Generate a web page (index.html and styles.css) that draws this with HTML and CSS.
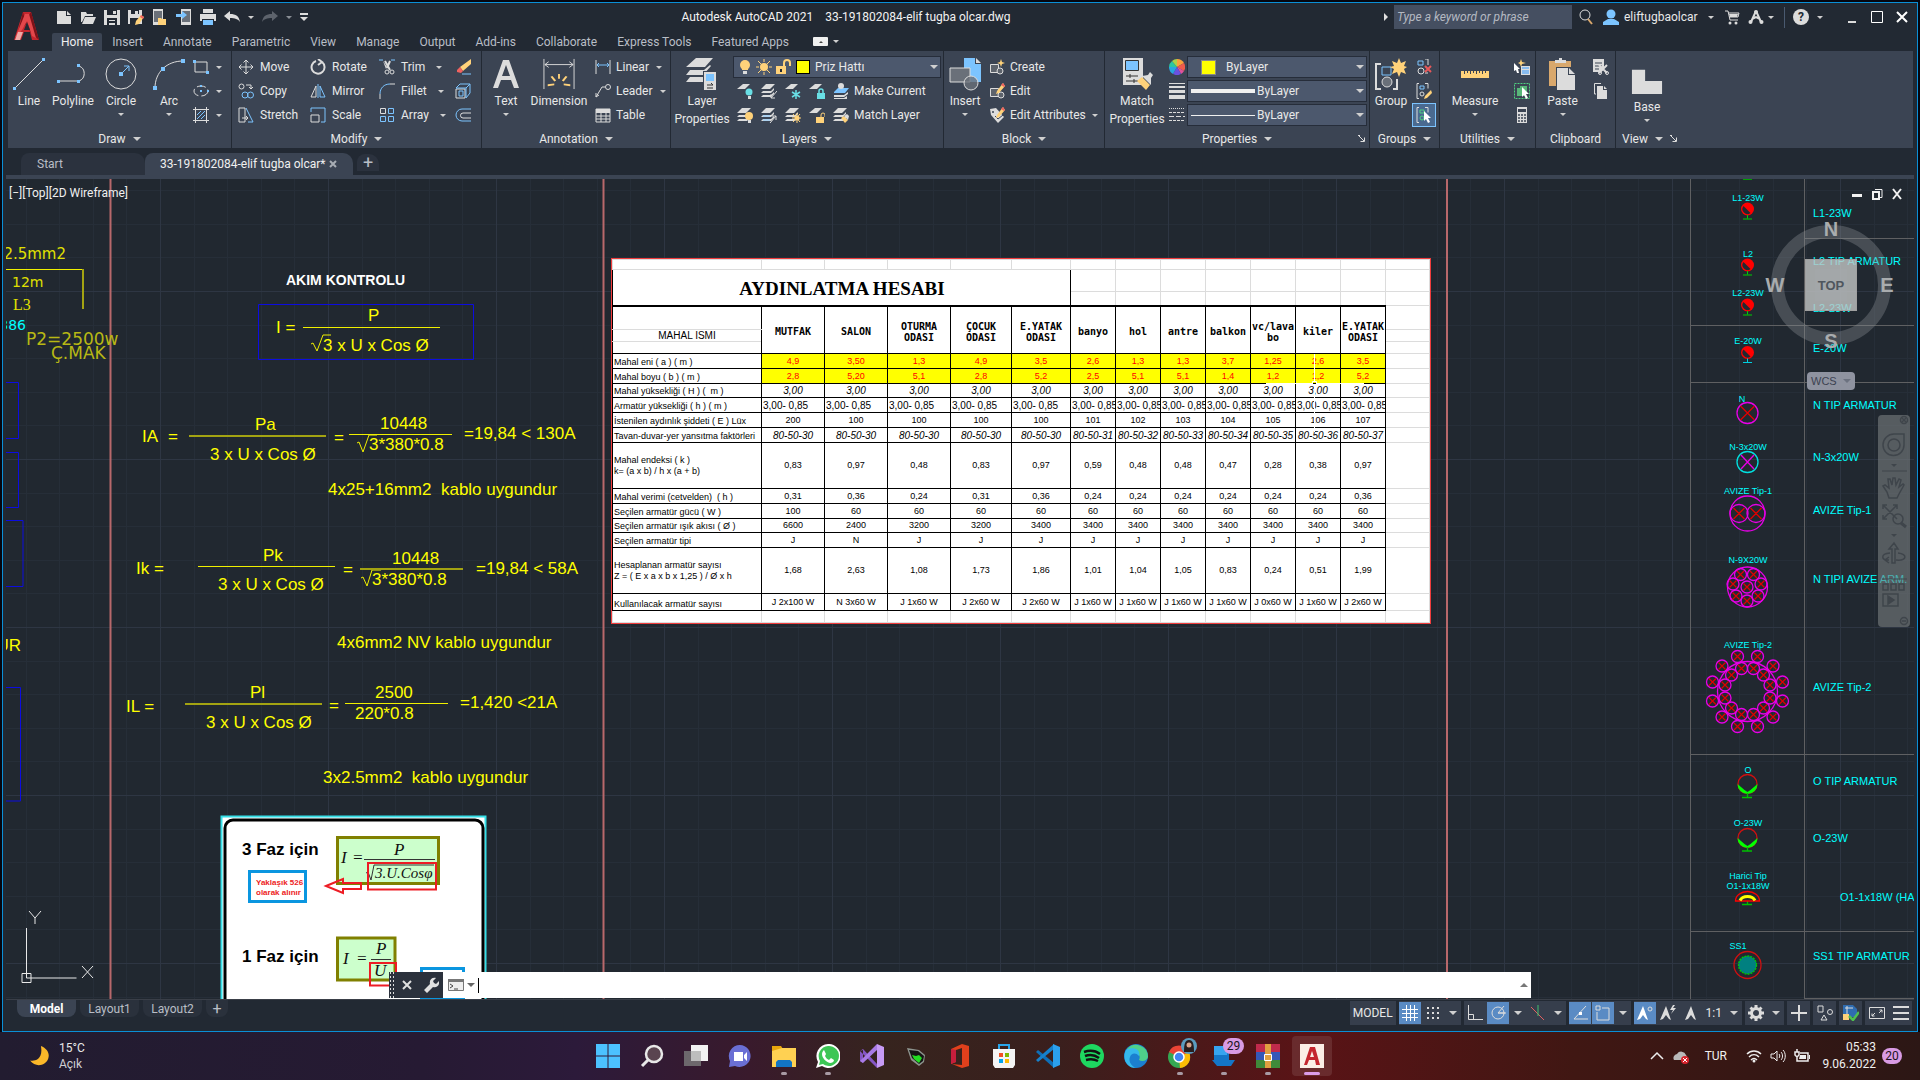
FILE: index.html
```html
<!DOCTYPE html>
<html lang="en">
<head>
<meta charset="utf-8">
<title>Autodesk AutoCAD 2021</title>
<link rel="stylesheet" href="styles.css">
</head>
<body>
<svg class="sprite" aria-hidden="true">
  <defs>
    <!-- quick access -->
    <symbol id="i-new" viewBox="0 0 16 16"><path class="fw" d="M1 2h9v5h5v8H1z"/><path class="fw" d="M11 2l4 4h-4z"/></symbol>
    <symbol id="i-open" viewBox="0 0 16 16"><path class="fw" d="M1 3h5l1 2h6v2H5l-3 6H1z"/><path class="fw" d="M5 8h11l-3 7H2z"/></symbol>
    <symbol id="i-save" viewBox="0 0 16 16"><path class="fw" d="M0 1h16v15H0z"/><path class="bg" d="M3 1h10v5H3zM3 9h10v7H3z"/><path class="fw" d="M9 2h3v3H9zM5 11h6v1H5zM5 14h6v2H5z"/></symbol>
    <symbol id="i-saveas" viewBox="0 0 16 16"><path class="fw" d="M0 1h14v14H0z"/><path class="bg" d="M3 1h8v4H3zM2 9h9v6H2z"/><path class="fw" d="M7 2h3v3H7z"/><path class="fy" d="M13 6l3 2-5 7-4 1 1-4z"/><path class="fr" d="M13 6l3 2-1 2-3-2z"/></symbol>
    <symbol id="i-phone" viewBox="0 0 16 16"><path class="fw" d="M1 0h10v16H1z"/><path class="fg" d="M2 2h8v11H2z"/><path class="fy" d="M6 9h3l1 1h4v6H6z"/></symbol>
    <symbol id="i-phone2" viewBox="0 0 16 16"><path class="fw" d="M5 0h10v16H5z"/><path class="fg" d="M6 2h8v11H6z"/><path class="fb" d="M0 5h6V2l5 4-5 4V8H0z"/></symbol>
    <symbol id="i-print" viewBox="0 0 16 16"><path class="fw" d="M3 0h10v4H3zM0 5h16v7H0z"/><path class="bg" d="M2 10h12v6H2z"/><path class="fb" d="M3 11h10v5H3z"/></symbol>
    <symbol id="i-undo" viewBox="0 0 16 16"><path class="fw" d="M0 7l6-5v3c6 0 9 2 10 8-2-3-5-4-10-4v3z"/></symbol>
    <symbol id="i-redo" viewBox="0 0 16 16"><path fill="#5d636c" d="M16 7l-6-5v3C4 5 1 7 0 13c2-3 5-4 10-4v3z"/></symbol>
    <symbol id="i-more" viewBox="0 0 8 8"><path class="fw" d="M0 0h8v2H0zM0 4h8L4 8z"/></symbol>
    <!-- big ribbon icons -->
    <symbol id="b-line" viewBox="0 0 32 32"><path class="sw" d="M2 30L30 2"/><path class="fb" d="M0 29h3v3H0zM29 0h3v3h-3z"/></symbol>
    <symbol id="b-poly" viewBox="0 0 32 32"><path class="sw" d="M2 23h20a8 8 0 0 0 0-15"/><path class="fb" d="M0 22h3v3H0zM20 22h3v3h-3zM20 6h3v3h-3z"/></symbol>
    <symbol id="b-circle" viewBox="0 0 32 32"><circle class="sw" cx="16" cy="16" r="15"/><path class="sb" d="M16 16l8-8m-5 0h5v5"/><path class="fb" d="M14 14h4v4h-4z"/></symbol>
    <symbol id="b-arc" viewBox="0 0 32 32"><path class="sw" d="M2 30C2 14 14 3 30 3"/><path class="fb" d="M0 28h4v4H0zM8 9h4v4H8zM28 1h4v4h-4z"/></symbol>
    <symbol id="b-text" viewBox="0 0 32 32"><path class="fw" d="M3 30L13 2h6l10 28h-5l-3-8H11l-3 8zM12 18h8L16 7z"/></symbol>
    <symbol id="b-dim" viewBox="0 0 34 34"><path class="sw" d="M1 1v32M33 1v32M2 7h30M6 4L2 7l4 3M28 4l4 3-4 3"/><path class="fy" d="M16 17h2v5h-2zM8 20l2-1 4 5-2 1zM26 20l-2-1-4 5 2 1zM5 28l7-1v2l-7 1zM29 28l-7-1v2l7 1z"/></symbol>
    <symbol id="b-layers" viewBox="0 0 32 34"><path class="fw" d="M0 10L10 1h17l-8 9zM0 18l4-5h14l6-5 1 1-8 9zM0 25l4-5h13v5z"/><path class="bgr" d="M17 14h15v20H17z"/><path class="fw" d="M18 15h12v18H18z"/><path class="fb" d="M20 17h8v7h-8z"/><path fill="none" stroke="#333" d="M21 28h6m-2-2l2 2M27 31h-6"/></symbol>
    <symbol id="b-insert" viewBox="0 0 32 32"><path class="fb" d="M15 0h11v6h6v18H15z"/><path class="fw" d="M27 0l5 5h-5z"/><path fill="#6a7079" stroke="#dcdcdc" d="M1 10h20v14H1z"/><circle fill="#6a7079" fill-opacity=".8" stroke="#dcdcdc" cx="22" cy="25" r="7"/></symbol>
    <symbol id="b-match" viewBox="0 0 32 32"><path class="fw" d="M2 0h20v27H2z"/><path fill="#7cc4ff" stroke="#333" d="M4.500 2.500h13v10h-13z"/><path fill="none" stroke="#333" d="M5 18h12M5 23h12M9 16v4M13 21v4"/><path class="fy" d="M16 23l5-4 8 8-4 5z"/><path class="fw" d="M21 18l6-1 2-3 3 3-2 3v7z"/></symbol>
    <symbol id="b-group" viewBox="0 0 32 32"><path class="sw2" d="M6 6H1v25h5M18 31h4v-10"/><path class="sb" d="M7 9h9v8H7z"/><circle fill="#6a7079" stroke="#dcdcdc" cx="12" cy="24" r="5"/><path class="fy" d="M24 0l2 5 5-2-2 5 3 1-3 2 2 5-5-2-2 5-2-5-5 2 2-5-4-2 4-1-2-5 5 2z"/></symbol>
    <symbol id="b-measure" viewBox="0 0 32 32"><path class="fy" d="M2 13h28v7H2z"/><path stroke="#3b4453" d="M5.500 13v3M8.500 13v2M11.500 13v3M14.500 13v2M17.500 13v3M20.500 13v2M23.500 13v3M26.500 13v2"/></symbol>
    <symbol id="b-paste" viewBox="0 0 32 32"><path fill="#d9a86c" d="M2 3h22v25H2z"/><path class="fw" d="M8 2h4V0h3v2h4v3H8z"/><path class="bgr" d="M9 9h20v23H9z"/><path class="fw" d="M10 10h11v7h7v15H10zM22 10l6 6h-6z"/></symbol>
    <symbol id="b-base" viewBox="0 0 34 32"><path class="fw" d="M1 5h14v12h18v14H1z"/></symbol>
    <!-- small ribbon icons -->
    <symbol id="s-rect" viewBox="0 0 16 16"><path class="sw" d="M2 3h12v10H2z"/><path class="fb" d="M0 1h3v3H0zM13 12h3v3h-3z"/></symbol>
    <symbol id="s-ellipse" viewBox="0 0 16 16"><ellipse class="sw" cx="8" cy="8" rx="7" ry="5" stroke-dasharray="9 3"/><path class="fb" d="M7 7h2v2H7zM7 2h2v2H7zM14 7h2v2h-2z"/></symbol>
    <symbol id="s-hatch" viewBox="0 0 16 16"><path class="sw" d="M2.500 0v16M13.500 0v16M0 2.500h16M0 13.500h16"/><path class="sb" d="M4 8l4-4M4 12l8-8M8 12l4-4"/></symbol>
    <symbol id="s-move" viewBox="0 0 16 16"><path class="sw" d="M8 1v14M1 8h14M5.500 3.500L8 1l2.500 2.500M5.500 12.500L8 15l2.500-2.500M3.500 5.500L1 8l2.500 2.500M12.500 5.500L15 8l-2.500 2.500"/></symbol>
    <symbol id="s-rotate" viewBox="0 0 16 16"><path class="sw2" d="M12 3a6.500 6.500 0 1 1-6-1M8 0l4 3-4 3"/></symbol>
    <symbol id="s-trim" viewBox="0 0 16 16"><path class="sb" d="M0 1h4M12 1h4"/><path class="sw" stroke-width="2" d="M6 2l5 9M11 2L8 9"/><circle class="sw" cx="8" cy="13" r="2"/><circle class="sw" cx="13" cy="13" r="2"/><path class="fw" d="M4 2l3 8 1-2z"/></symbol>
    <symbol id="s-erase" viewBox="0 0 16 16"><path class="fy" d="M16 0v5L8 12 5 8z"/><path class="fr" d="M5 8l3 4-2 2-4-1v-2z"/><path class="sb" d="M7 15h9"/></symbol>
    <symbol id="s-copy" viewBox="0 0 16 16"><circle class="sw" cx="3.500" cy="3.500" r="2.500"/><path class="sw" d="M8 2h5v4m-2-2l2 2 2-2"/><circle class="sb" cx="7" cy="12" r="3"/><circle class="sb" cx="12.500" cy="12" r="3"/></symbol>
    <symbol id="s-mirror" viewBox="0 0 16 16"><path class="sw" d="M6 3v11H1z"/><path class="sb" d="M10 3v11h5zM8 1v14"/></symbol>
    <symbol id="s-fillet" viewBox="0 0 16 16"><path class="sb" d="M1 11C1 5 5 1 11 1"/><path class="sw" d="M1 11v5M11 1h5"/></symbol>
    <symbol id="s-explode" viewBox="0 0 16 16"><path class="sw" d="M1 6h9v9H1z"/><path class="sb" d="M1 5l4-4h10l-4 4zM15 1v9l-4 5V5M4 8h4v5H4z"/></symbol>
    <symbol id="s-stretch" viewBox="0 0 16 16"><path class="sw" d="M1 1h6v14H1zM4 11h6m-2-2l2 2-2 2"/><path class="sb" d="M8 1l7 14h-5"/></symbol>
    <symbol id="s-scale" viewBox="0 0 16 16"><path class="sb" d="M1 5V1h14v14h-4"/><path class="sw" d="M1 8h8v7H1z"/></symbol>
    <symbol id="s-array" viewBox="0 0 16 16"><path class="sw" d="M1.500 1.500h5v5h-5z"/><path class="sb" d="M9.500 1.500h5v5h-5zM1.500 9.500h5v5h-5zM9.500 9.500h5v5h-5z"/></symbol>
    <symbol id="s-offset" viewBox="0 0 16 16"><path class="sb" d="M16 2H7a6 6 0 0 0 0 12h9"/><path class="sw" d="M16 6H8a2.500 2.500 0 0 0 0 5h8"/></symbol>
    <symbol id="s-linear" viewBox="0 0 16 16"><path class="sw" d="M1 1v14M15 1v14"/><path class="sb" d="M2 6h12M4 4L2 6l2 2M12 4l2 2-2 2"/></symbol>
    <symbol id="s-leader" viewBox="0 0 16 16"><circle class="sw" cx="13" cy="4" r="2.500"/><path class="sw" d="M10 4H7L1 14m0-4v4l3-2"/></symbol>
    <symbol id="s-table" viewBox="0 0 16 16"><path class="sw" d="M1 2h14v13H1zM1 9h14M1 12h14M6 5v10M11 5v10"/><path class="fw" d="M1 2h14v4H1z"/></symbol>
    <symbol id="s-ly" viewBox="0 0 16 16"><path class="fw" d="M0 6l5-5h9L9 6zM0 10l2-2h8l3-3v2l-3 3zM0 14l2-2h8l3-3v2l-3 3z"/></symbol>
    <symbol id="s-ly1" viewBox="0 0 16 16"><path class="fw" d="M0 6l6-5h7L8 6z"/></symbol>
    <symbol id="s-loff" viewBox="0 0 16 16"><use href="#s-ly1"/><circle cx="12" cy="9" r="3.500" fill="#69dfe5"/><path class="fw" d="M11 13h3v3h-3z"/></symbol>
    <symbol id="s-liso" viewBox="0 0 16 16"><use href="#s-ly"/><path class="sw" d="M16 8l-6 7m0-4v4h4"/></symbol>
    <symbol id="s-lfrz" viewBox="0 0 16 16"><use href="#s-ly1"/><path stroke="#69dfe5" stroke-width="1.500" d="M11 7v9M7 9l8 5M15 9l-8 5"/></symbol>
    <symbol id="s-llock" viewBox="0 0 16 16"><use href="#s-ly1"/><path fill="#69dfe5" d="M8 10h8v6H8z"/><path fill="none" stroke="#69dfe5" stroke-width="1.500" d="M10 10V8a2 2 0 0 1 4 0v2"/></symbol>
    <symbol id="s-lcur" viewBox="0 0 16 16"><path class="fb" d="M1 9l4-4h11l-4 5H1z"/><path class="fw" d="M1 12h10l4-3v2l-4 3H1zM1 15h10l3-2v3H1z"/><circle class="fw" cx="8" cy="3" r="3"/></symbol>
    <symbol id="s-lon" viewBox="0 0 16 16"><use href="#s-ly"/><circle cx="12" cy="9" r="4" class="fy"/><path class="fw" d="M11 13h3v3h-3z"/></symbol>
    <symbol id="s-luniso" viewBox="0 0 16 16"><use href="#s-ly"/><path class="sb" d="M2 9h7M2 13h7"/><path class="sw" d="M9 16l6-7m-4 0h4v4"/></symbol>
    <symbol id="s-lthaw" viewBox="0 0 16 16"><use href="#s-ly"/><circle cx="12" cy="11" r="2.500" class="fy"/><path class="sy" d="M12 6v10M7 11h9M8 7l7 8M15 7l-7 8"/></symbol>
    <symbol id="s-lunlock" viewBox="0 0 16 16"><use href="#s-ly1"/><path class="fy" d="M7 10h8v6H7z"/><path class="sy" d="M12 10V8a2 2 0 0 1 4 0v2"/></symbol>
    <symbol id="s-lmatch" viewBox="0 0 16 16"><use href="#s-ly"/><path class="fy" d="M8 11l3-2 4 4-3 3z"/><path class="fw" d="M11 9l3-2 2 2-1 4z"/></symbol>
    <symbol id="s-bulb" viewBox="0 0 16 16"><circle class="fy" cx="8" cy="6" r="5"/><path class="fy" d="M5 8h6v3H5z"/><path class="fw" d="M6 12h4v3H6z"/></symbol>
    <symbol id="s-sun" viewBox="0 0 16 16"><circle class="fy" cx="8" cy="8" r="4"/><path class="sy" d="M8 0v3M8 13v3M0 8h3M13 8h3M2 2l3 3M11 11l3 3M14 2l-3 3M5 11l-3 3"/></symbol>
    <symbol id="s-lock" viewBox="0 0 16 16"><path class="fy" d="M1 7h10v8H1z"/><path fill="none" stroke="#ffd27a" stroke-width="2" d="M9 7V4a3 3 0 0 1 6 0v3"/><path class="bg" d="M5 10h2v3H5z"/></symbol>
    <symbol id="s-create" viewBox="0 0 16 16"><path fill="#5d636c" stroke="#dcdcdc" d="M1.500 5.500h8v8h-8z"/><circle fill="#5d636c" stroke="#dcdcdc" cx="11" cy="12" r="3"/><path class="fy" d="M12 0l1 3 3 1-3 1-1 3-1-3-3-1 3-1z"/></symbol>
    <symbol id="s-edit" viewBox="0 0 16 16"><path fill="#5d636c" stroke="#dcdcdc" d="M1.500 5.500h8v8h-8z"/><circle fill="#5d636c" stroke="#dcdcdc" cx="12" cy="12" r="3"/><path class="fy" d="M14 0l2 3-6 7-3 1 1-3z"/><path class="fr" d="M14 0l2 3-1 1-3-2z"/></symbol>
    <symbol id="s-attr" viewBox="0 0 16 16"><path class="fw" d="M1 2l6-1 8 9-6 6-7-8z"/><circle class="bgr" cx="4" cy="5" r="1"/><path fill="none" stroke="#3b4453" d="M6 9l3 3 5-4"/><path class="fy" d="M14 0l2 3-6 7-3 1 1-3z"/><path class="fr" d="M14 0l2 3-1 1-3-2z"/></symbol>
    <symbol id="s-wheel" viewBox="0 0 16 16"><path fill="#f9a13a" d="M8 8V0a8 8 0 0 1 7 4z"/><path fill="#ef5b4c" d="M8 8l7-4a8 8 0 0 1 0 8z"/><path fill="#e0529c" d="M8 8l7 4a8 8 0 0 1-3 3z"/><path fill="#6b52e0" d="M8 8l4 7a8 8 0 0 1-8 0z"/><path fill="#2aa5e0" d="M8 8l-4 7a8 8 0 0 1-4-7z"/><path fill="#2bc6a0" d="M8 8H0a8 8 0 0 1 3-6z"/><path fill="#a7d34a" d="M8 8L3 2a8 8 0 0 1 5-2z"/></symbol>
    <symbol id="s-lw" viewBox="0 0 16 16"><path class="fw" d="M0 0h16v1H0zM0 3h16v2H0zM0 7h16v3H0zM0 12h16v4H0z"/></symbol>
    <symbol id="s-lt" viewBox="0 0 16 16"><path class="sw" stroke-dasharray="1 1" d="M0 1.500h16"/><path class="sw" stroke-dasharray="3 1" d="M0 5.500h16M0 13.500h16"/><path class="sw" stroke-dasharray="5 2" d="M0 9.500h16"/></symbol>
    <symbol id="s-ungroup" viewBox="0 0 16 16"><path class="sb" d="M2 2h5v4H2z"/><circle class="sw" cx="5" cy="12" r="3"/><path class="sw" d="M9 0h3v6M12 14h-3"/><path stroke="#e8585a" stroke-width="2" d="M9 7l6 6M15 7l-6 6"/></symbol>
    <symbol id="s-gedit" viewBox="0 0 16 16"><path class="sw" d="M3 .5H1v15h2M9 .5h3v5"/><path class="sb" d="M4 3h4v3H4z"/><circle class="sw" cx="6" cy="11" r="2"/><path class="fy" d="M15 7l1 3-5 5-3 1 1-3z"/></symbol>
    <symbol id="s-gsel" viewBox="0 0 16 16"><path class="sw" d="M3 .5H1v15h2M9 .5h3v5"/><path fill="none" stroke="#4fd080" d="M4 3h4v3H4z"/><circle fill="none" stroke="#4fd080" cx="6" cy="11" r="2"/><path fill="#fff" d="M8 4l7 7h-3l2 4-2 1-2-4-2 2z"/></symbol>
    <symbol id="s-qsel" viewBox="0 0 16 16"><path fill="#fff" d="M0 4l6 6H4l1 4H3l-1-3-2 1z"/><path class="fy" d="M7 0l1 3 4 1-4 1-1 3-1-3-2-1 2-1z"/><path class="fw" d="M7 7h9v9H7z"/><path stroke="#39f" d="M8 9h7M8 12h7M8 14h7"/></symbol>
    <symbol id="s-selall" viewBox="0 0 16 16"><path fill="none" stroke="#4fd080" stroke-dasharray="2 1" d="M.5.5h15v15H.5z"/><path fill="#58b678" d="M3 5h8v8H3zM6 3h7v7H6z"/><path fill="#fff" d="M8 4l7 7h-3l2 4-2 1-2-4-2 2z"/></symbol>
    <symbol id="s-calc" viewBox="0 0 16 16"><path class="fw" d="M3 0h10v16H3z"/><path fill="#3b4453" d="M4 2h8v3H4z"/><path stroke="#3b4453" d="M4 8h8M4 11h8M4 14h8" stroke-width="1.500" stroke-dasharray="2 1"/></symbol>
    <symbol id="s-cut" viewBox="0 0 16 16"><path class="fw" d="M0 0h11v10l-3 3H0z"/><path stroke="#3b4453" d="M2 4h7M2 7h7M2 10h4"/><path class="sw" d="M6 6l8 8M14 6l-8 8" stroke-width="2"/><circle class="sw" cx="7" cy="14" r="1.500"/><circle class="sw" cx="14" cy="14" r="1.500"/></symbol>
    <symbol id="s-copyclip" viewBox="0 0 16 16"><path class="sw" d="M3 11H1.500V.5H8"/><path class="fw" d="M4 3h6v4h4v9H4zM11 3l3 3h-3z"/></symbol>
    <symbol id="s-launch" viewBox="0 0 8 8"><path class="sw" d="M0 .5h2M1 1l5 5M2.500 6.500h4v-4"/></symbol>
    <!-- title bar right -->
    <symbol id="t-search" viewBox="0 0 16 16"><circle class="sw" cx="7" cy="6" r="5"/><path stroke="#d9a86c" stroke-width="2" d="M10 10l4 5"/></symbol>
    <symbol id="t-user" viewBox="0 0 16 16"><circle class="fb" cx="8" cy="5" r="4.500"/><path class="fb" d="M0 16v-3l5-3h6l5 3v3z"/></symbol>
    <symbol id="t-cart" viewBox="0 0 16 16"><path class="sw" d="M1 2h3l2 9h8M4 4h11l-1 4H5"/><path class="fw" d="M5 5h9l-1 3H6z"/><circle class="fw" cx="6" cy="14" r="1.500"/><circle class="fw" cx="12" cy="14" r="1.500"/></symbol>
    <symbol id="t-app" viewBox="0 0 16 16"><path fill="none" stroke="#dcdcdc" stroke-width="2" d="M8 2l5 11M8 2L3 13M4 10l4-2 4 2"/><circle class="fw" cx="8" cy="3" r="2"/><circle class="fw" cx="2.500" cy="13" r="2"/><circle class="fw" cx="13.500" cy="13" r="2"/></symbol>
    <!-- drawing blocks -->
    <g id="lampg"><circle r="6" fill="none" stroke="#e800e8" stroke-width="1.300"/><path stroke="#e00000" stroke-width="1.200" d="M-3.500-3.500l7 7M3.500-3.500l-7 7"/></g>
    <g id="sconce"><circle r="6.500" fill="#f00"/><path fill="#212830" d="M-4-3A5 5 0 0 0 3 4z"/><path stroke="currentColor" d="M0 6v3.500M-4.500 10h9"/></g>
    <pattern id="grid" x="160" y="291" width="168" height="168" patternUnits="userSpaceOnUse">
      <path stroke="#262e38" d="M34.500 0v168M67.500 0v168M101.500 0v168M134.500 0v168M0 34.500h168M0 67.500h168M0 101.500h168M0 134.500h168"/>
      <path stroke="#2e3643" d="M.5 0v168M0 .5h168"/>
    </pattern>
  </defs>
</svg>

<div class="window">
  <header class="titlebar">
    <button class="logo" aria-label="Application menu">
      <svg width="26" height="30" viewBox="0 0 26 30"><path fill="#c4262e" d="M9 1h8l8 28h-7l-2-8h-6l-3 8H0z"/><path fill="#7d1218" d="M9 1l3 12-8 8zM17 1l8 28-9-8-3-14z"/><path fill="#e2474b" d="M11 3h4l7 24-4-2-5-15-5 9-7 8z"/><path fill="#f0a9a6" d="M1 29l3-8h5l-3 8z"/><path fill="#222933" d="M13 11l3 8h-6z"/></svg>
    </button>
    <div class="heads">
      <div class="topline">
        <div class="quick">
          <button aria-label="New"><svg><use href="#i-new"/></svg></button>
          <button aria-label="Open"><svg><use href="#i-open"/></svg></button>
          <button aria-label="Save"><svg><use href="#i-save"/></svg></button>
          <button aria-label="Save as"><svg><use href="#i-saveas"/></svg></button>
          <button aria-label="Open from mobile"><svg><use href="#i-phone"/></svg></button>
          <button aria-label="Save to mobile"><svg><use href="#i-phone2"/></svg></button>
          <button aria-label="Plot"><svg><use href="#i-print"/></svg></button>
          <button aria-label="Undo"><svg><use href="#i-undo"/></svg></button>
          <i class="arr"></i>
          <button aria-label="Redo"><svg><use href="#i-redo"/></svg></button>
          <i class="arr dim"></i>
          <button class="more" aria-label="Customize"><svg><use href="#i-more"/></svg></button>
        </div>
        <div class="doc-title"><span>Autodesk AutoCAD 2021</span><span>33-191802084-elif tugba olcar.dwg</span></div>
        <div class="account">
          <i class="arr-r"></i>
          <input class="search" type="text" placeholder="Type a keyword or phrase" aria-label="Search">
          <svg class="ic search-ic"><use href="#t-search"/></svg>
          <svg class="ic"><use href="#t-user"/></svg>
          <button class="user">eliftugbaolcar</button><i class="arr"></i>
          <svg class="ic cart"><use href="#t-cart"/></svg>
          <svg class="ic"><use href="#t-app"/></svg><i class="arr"></i>
          <i class="vsep"></i>
          <button class="help" aria-label="Help">?</button><i class="arr"></i>
          <button class="win min" aria-label="Minimize"><svg viewBox="0 0 12 12"><path class="sw2" d="M2 11h8"/></svg></button>
          <button class="win" aria-label="Maximize"><svg viewBox="0 0 12 12"><path fill="none" stroke="#fff" d="M.5.5h11v11H.5z"/></svg></button>
          <button class="win" aria-label="Close"><svg viewBox="0 0 12 12"><path stroke="#fff" stroke-width="2" d="M1 1l10 10M11 1L1 11"/></svg></button>
        </div>
      </div>
      <nav class="tabs">
        <button class="on">Home</button><button>Insert</button><button>Annotate</button><button>Parametric</button><button>View</button><button>Manage</button><button>Output</button><button>Add-ins</button><button>Collaborate</button><button>Express Tools</button><button>Featured Apps</button>
        <button class="mini" aria-label="Minimize ribbon"><i></i></button><i class="arr"></i>
      </nav>
    </div>
  </header>

  <section class="ribbon">
    <div class="panel p-draw">
      <div class="body">
        <button class="big"><svg><use href="#b-line"/></svg>Line</button>
        <button class="big"><svg><use href="#b-poly"/></svg>Polyline</button>
        <button class="big circ"><svg><use href="#b-circle"/></svg>Circle<i class="arr"></i></button>
        <button class="big"><svg><use href="#b-arc"/></svg>Arc<i class="arr"></i></button>
        <div class="col">
          <button class="tool" aria-label="Rectangle"><svg><use href="#s-rect"/></svg><i class="arr"></i></button>
          <button class="tool" aria-label="Ellipse"><svg><use href="#s-ellipse"/></svg><i class="arr"></i></button>
          <button class="tool" aria-label="Hatch"><svg><use href="#s-hatch"/></svg><i class="arr"></i></button>
        </div>
      </div>
      <div class="cap">Draw<i class="arr lg"></i></div>
    </div>
    <div class="panel p-modify">
      <div class="body">
        <div class="col">
          <button class="tool"><svg><use href="#s-move"/></svg>Move</button>
          <button class="tool"><svg><use href="#s-copy"/></svg>Copy</button>
          <button class="tool"><svg><use href="#s-stretch"/></svg>Stretch</button>
        </div>
        <div class="col">
          <button class="tool"><svg><use href="#s-rotate"/></svg>Rotate</button>
          <button class="tool"><svg><use href="#s-mirror"/></svg>Mirror</button>
          <button class="tool"><svg><use href="#s-scale"/></svg>Scale</button>
        </div>
        <div class="col">
          <button class="tool"><svg><use href="#s-trim"/></svg>Trim<i class="arr"></i></button>
          <button class="tool"><svg><use href="#s-fillet"/></svg>Fillet<i class="arr"></i></button>
          <button class="tool"><svg><use href="#s-array"/></svg>Array<i class="arr"></i></button>
        </div>
        <div class="col">
          <button class="tool" aria-label="Erase"><svg><use href="#s-erase"/></svg></button>
          <button class="tool" aria-label="Explode"><svg><use href="#s-explode"/></svg></button>
          <button class="tool" aria-label="Offset"><svg><use href="#s-offset"/></svg></button>
        </div>
      </div>
      <div class="cap">Modify<i class="arr lg"></i></div>
    </div>
    <div class="panel p-annot">
      <div class="body">
        <button class="big"><svg><use href="#b-text"/></svg>Text<i class="arr"></i></button>
        <button class="big"><svg><use href="#b-dim"/></svg>Dimension</button>
        <div class="col">
          <button class="tool"><svg><use href="#s-linear"/></svg>Linear<i class="arr"></i></button>
          <button class="tool"><svg><use href="#s-leader"/></svg>Leader<i class="arr"></i></button>
          <button class="tool"><svg><use href="#s-table"/></svg>Table</button>
        </div>
      </div>
      <div class="cap">Annotation<i class="arr lg"></i></div>
    </div>
    <div class="panel p-layers">
      <div class="body">
        <button class="big"><svg><use href="#b-layers"/></svg>Layer<br>Properties</button>
        <div class="col">
          <button class="combo layer-combo"><svg><use href="#s-bulb"/></svg><svg><use href="#s-sun"/></svg><svg><use href="#s-lock"/></svg><i class="sw-y small"></i>Priz Hattı<i class="arr lg end"></i></button>
          <div class="icons">
            <button aria-label="Off"><svg><use href="#s-loff"/></svg></button><button aria-label="Isolate"><svg><use href="#s-liso"/></svg></button><button aria-label="Freeze"><svg><use href="#s-lfrz"/></svg></button><button aria-label="Lock"><svg><use href="#s-llock"/></svg></button><button><svg><use href="#s-lcur"/></svg>Make Current</button>
          </div>
          <div class="icons">
            <button aria-label="On"><svg><use href="#s-lon"/></svg></button><button aria-label="Unisolate"><svg><use href="#s-luniso"/></svg></button><button aria-label="Thaw"><svg><use href="#s-lthaw"/></svg></button><button aria-label="Unlock"><svg><use href="#s-lunlock"/></svg></button><button><svg><use href="#s-lmatch"/></svg>Match Layer</button>
          </div>
        </div>
      </div>
      <div class="cap">Layers<i class="arr lg"></i></div>
    </div>
    <div class="panel p-block">
      <div class="body">
        <button class="big"><svg><use href="#b-insert"/></svg>Insert<i class="arr"></i></button>
        <div class="col">
          <button class="tool"><svg><use href="#s-create"/></svg>Create</button>
          <button class="tool"><svg><use href="#s-edit"/></svg>Edit</button>
          <button class="tool"><svg><use href="#s-attr"/></svg>Edit Attributes<i class="arr"></i></button>
        </div>
      </div>
      <div class="cap">Block<i class="arr lg"></i></div>
    </div>
    <div class="panel p-props">
      <div class="body">
        <button class="big"><svg><use href="#b-match"/></svg>Match<br>Properties</button>
        <div class="col">
          <div class="prop"><svg><use href="#s-wheel"/></svg><button class="combo"><i class="sw-y"></i>ByLayer<i class="arr lg end"></i></button></div>
          <div class="prop"><svg><use href="#s-lw"/></svg><button class="combo"><i class="rule thick"></i>ByLayer<i class="arr lg end"></i></button></div>
          <div class="prop"><svg><use href="#s-lt"/></svg><button class="combo"><i class="rule"></i>ByLayer<i class="arr lg end"></i></button></div>
        </div>
      </div>
      <div class="cap">Properties<i class="arr lg"></i><svg class="launch corner"><use href="#s-launch"/></svg></div>
    </div>
    <div class="panel p-groups">
      <div class="body">
        <button class="big"><svg><use href="#b-group"/></svg>Group</button>
        <div class="col">
          <button class="tool" aria-label="Ungroup"><svg><use href="#s-ungroup"/></svg></button>
          <button class="tool" aria-label="Group edit"><svg><use href="#s-gedit"/></svg></button>
          <button class="tool sel" aria-label="Group selection"><svg><use href="#s-gsel"/></svg></button>
        </div>
      </div>
      <div class="cap">Groups<i class="arr lg"></i></div>
    </div>
    <div class="panel p-utils">
      <div class="body">
        <button class="big"><svg><use href="#b-measure"/></svg>Measure<i class="arr"></i></button>
        <div class="col">
          <button class="tool" aria-label="Quick select"><svg><use href="#s-qsel"/></svg></button>
          <button class="tool" aria-label="Select all"><svg><use href="#s-selall"/></svg></button>
          <button class="tool" aria-label="Calculator"><svg><use href="#s-calc"/></svg></button>
        </div>
      </div>
      <div class="cap">Utilities<i class="arr lg"></i></div>
    </div>
    <div class="panel p-clip">
      <div class="body">
        <button class="big"><svg><use href="#b-paste"/></svg>Paste<i class="arr"></i></button>
        <div class="col">
          <button class="tool" aria-label="Cut"><svg><use href="#s-cut"/></svg></button>
          <button class="tool" aria-label="Copy clip"><svg><use href="#s-copyclip"/></svg></button>
        </div>
      </div>
      <div class="cap">Clipboard</div>
    </div>
    <div class="panel p-view">
      <div class="body"><button class="big"><svg><use href="#b-base"/></svg>Base<i class="arr"></i></button></div>
      <div class="cap">View<i class="arr lg"></i><svg class="launch"><use href="#s-launch"/></svg></div>
    </div>
  </section>

  <nav class="files">
    <button class="file">Start</button>
    <button class="file on">33-191802084-elif tugba olcar*<svg viewBox="0 0 8 8"><path stroke="#a8adb4" stroke-width="2" d="M1 1l6 6M7 1L1 7"/></svg></button>
    <button class="file add" aria-label="New tab">+</button>
  </nav>

  <main class="canvas">
    <svg class="drawing">
      <g transform="translate(-6 -179)">
        <rect x="6" y="179" width="100%" height="100%" fill="url(#grid)"/>
        <path class="frame" d="M110.500 179v2000M603.500 179v2000M1447 179v2000"/>
        <!-- feeder labels cut by the left edge -->
        <g class="cad">
          <text x="66" y="259" text-anchor="end" font-size="15">2.5mm2</text>
          <text x="12" y="287" font-size="14">12m</text>
          <text x="13" y="310" class="serif" font-size="16">L3</text>
          <text x="26" y="330" text-anchor="end" font-size="14" class="cy">386</text>
          <text x="26" y="345" font-size="17" class="dimt">P2=2500w</text>
          <text x="51" y="359" font-size="17" class="dimt">Ç.MAK</text>
        </g>
        <path class="yl" d="M0 269.500h83"/><path class="yd" d="M83 269v40"/>
        <path class="bl" d="M0 382.500h18.500v56H0M0 452.500h18.500v55H0M0 520.500h23v66H0M0 687.500h20.500v113.500H0"/>
        <text x="286" y="285" class="white-b">AKIM KONTROLU</text>
        <path class="bl" d="M258.500 304.500h215v55h-215z"/>
        <g class="eq">
          <text x="276" y="333">I =</text><text x="368" y="321">P</text><text x="323" y="351">3 x U x Cos Ø</text>
          <text x="21" y="651" text-anchor="end">UR</text>
          <text x="142" y="442">IA</text><text x="168" y="442">=</text><text x="255" y="430">Pa</text><text x="210" y="460">3 x U x Cos Ø</text><text x="334" y="443">=</text><text x="380" y="429">10448</text><text x="369" y="450">3*380*0.8</text><text x="464" y="439">=19,84 &lt; 130A</text>
          <text x="328" y="495">4x25+16mm2&#160; kablo uygundur</text>
          <text x="136" y="574">Ik =</text><text x="263" y="561">Pk</text><text x="218" y="590">3 x U x Cos Ø</text><text x="343" y="575">=</text><text x="392" y="564">10448</text><text x="372" y="585">3*380*0.8</text><text x="476" y="574">=19,84 &lt; 58A</text>
          <text x="337" y="648">4x6mm2 NV kablo uygundur</text>
          <text x="126" y="712">IL =</text><text x="250" y="698">Pl</text><text x="206" y="728">3 x U x Cos Ø</text><text x="329" y="711">=</text><text x="375" y="698">2500</text><text x="355" y="719">220*0.8</text><text x="460" y="708">=1,420 &lt;21A</text>
          <text x="323" y="783">3x2.5mm2&#160; kablo uygundur</text>
        </g>
        <path class="yl" d="M303 327.500h137M349 434.500h103M198 566.500h137M345 703.500h103M311 344l2-1 4 8 6-16h8M357 443l2-1 4 10 6-17h8M361 578l2-1 4 9 5-16h9"/>
        <path class="yd" d="M189 436h137M360 569h103M185 704h137"/>
        <!-- pasted formula picture -->
        <rect x="221.500" y="816.500" width="264" height="300" fill="#fff" stroke="#35e0e8" stroke-width="2"/>
        <rect x="225" y="820" width="258" height="300" rx="8" fill="#fff" stroke="#000" stroke-width="3"/>
        <text class="faz" x="242" y="855">3 Faz için</text><text class="faz" x="242" y="962">1 Faz için</text>
        <path class="green" d="M337.500 837.500h101v46h-101zM337.500 938h57.500v42h-57.500z"/>
        <g class="math">
          <text x="341" y="863">I</text><text x="352" y="863">=</text><text x="394" y="855">P</text><text x="375" y="878" class="den">3.U.Cosφ</text>
          <text x="343" y="964">I</text><text x="356" y="964">=</text><text x="376" y="954">P</text><text x="374" y="976">U</text>
          <path d="M364 859.500h71M371 959.500h20M366 873l2-1 3 8 3-15h60"/>
        </g>
        <path class="redl" d="M368 863h68v26.500h-68zM370 963h26v22.500h-26zM326 886l17-7v4h18v6h-18v4z"/>
        <path class="bluel" d="M249.500 871.500h56v30h-56zM421.500 968.500h42v30h-42z"/>
        <text class="note" x="256" y="885">Yaklaşık 526</text><text class="note" x="256" y="895">olarak alınır</text>
        <!-- UCS icon -->
        <path class="ucs" d="M26.500 928v50h50M22 973.500h9v9h-9zM29 911l6 7v6M41 911l-6 7M82 966l11 12M93 966l-11 12"/>
        <!-- fixture legend -->
        <path class="leg" d="M1690.500 179v2000M1804.500 179v820M1804 238.500h300M1690 325.500h400M1690 382.500h400M1690 754.500h400M1690 931.500h400M1804 998.500h300"/>
        <g class="ls" text-anchor="middle">
          <text x="1748" y="201">L1-23W</text><text x="1748" y="257">L2</text><text x="1748" y="296">L2-23W</text><text x="1748" y="344">E-20W</text><text x="1742" y="402">N</text><text x="1748" y="450">N-3x20W</text><text x="1748" y="494">AVIZE Tip-1</text><text x="1748" y="563">N-9X20W</text><text x="1748" y="648">AVIZE Tip-2</text><text x="1748" y="773">O</text><text x="1748" y="826">O-23W</text><text x="1748" y="879">Harici Tip</text><text x="1748" y="889">O1-1x18W</text><text x="1738" y="949">SS1</text>
        </g>
        <g class="ll">
          <text x="1813" y="217">L1-23W</text><text x="1813" y="265">L2 TIP ARMATUR</text><text x="1813" y="312">L2-23W</text><text x="1813" y="352">E-20W</text><text x="1813" y="409">N TIP ARMATUR</text><text x="1813" y="461">N-3x20W</text><text x="1813" y="514">AVIZE Tip-1</text><text x="1813" y="583">N TIPI AVIZE ARM.</text><text x="1813" y="691">AVIZE Tip-2</text><text x="1813" y="785">O TIP ARMATUR</text><text x="1813" y="842">O-23W</text><text x="1840" y="901">O1-1x18W (HAR</text><text x="1813" y="960">SS1 TIP ARMATUR</text>
        </g>
        <g color="#00d000"><path stroke="#00a000" stroke-width="2" d="M1743 179h9"/>
          <use href="#sconce" x="1747.500" y="209"/><use href="#sconce" x="1747.500" y="265"/><use href="#sconce" x="1747.500" y="305"/></g>
        <g color="#00d0e0"><use href="#sconce" x="1747.500" y="352.500"/></g>
        <g fill="none" stroke="#e800e8" stroke-width="1.300">
          <circle cx="1747.500" cy="413" r="10.500"/><circle cx="1747.500" cy="462" r="10.500" stroke="#00e0e0"/><path d="M1741 455l13 14M1754 455l-13 14"/>
          <circle cx="1747.500" cy="513.500" r="17.500"/><circle cx="1739" cy="513.500" r="9"/><circle cx="1756" cy="513.500" r="9"/>
          <circle cx="1747.500" cy="587" r="20"/><circle cx="1747.500" cy="691.500" r="30"/>
          <path stroke="#e00000" d="M1740.500 406l14 14M1754.500 406l-14 14M1733.500 508l11 11M1744.500 508l-11 11M1750.500 508l11 11M1761.500 508l-11 11"/>
        </g>
        <g transform="translate(1747 587)"><use href="#lampg"/><use href="#lampg" x="-6.500" y="-12.500"/><use href="#lampg" x="6.500" y="-12.500"/><use href="#lampg" x="14" y="-3"/><use href="#lampg" x="11" y="9"/><use href="#lampg" y="14"/><use href="#lampg" x="-11" y="9"/><use href="#lampg" x="-14" y="-3"/></g>
        <g transform="translate(1747.500 691.500)">
          <use href="#lampg" x="35" y="9.500"/><use href="#lampg" x="35" y="-9.500"/><use href="#lampg" x="-35" y="9.500"/><use href="#lampg" x="-35" y="-9.500"/><use href="#lampg" x="25.500" y="25.500"/><use href="#lampg" x="25.500" y="-25.500"/><use href="#lampg" x="-25.500" y="25.500"/><use href="#lampg" x="-25.500" y="-25.500"/><use href="#lampg" x="10" y="35"/><use href="#lampg" x="10" y="-35"/><use href="#lampg" x="-10" y="35"/><use href="#lampg" x="-10" y="-35"/>
          <use href="#lampg" x="22.500" y="6.500"/><use href="#lampg" x="22.500" y="-6.500"/><use href="#lampg" x="-22.500" y="6.500"/><use href="#lampg" x="-22.500" y="-6.500"/><use href="#lampg" x="16" y="16.500"/><use href="#lampg" x="16" y="-16.500"/><use href="#lampg" x="-16" y="16.500"/><use href="#lampg" x="-16" y="-16.500"/><use href="#lampg" x="6" y="23"/><use href="#lampg" x="6" y="-23"/><use href="#lampg" x="-6" y="23"/><use href="#lampg" x="-6" y="-23"/>
        </g>
        <g fill="none" stroke="#d01010" stroke-width="1.300">
          <circle cx="1747.500" cy="784" r="9.500"/><circle cx="1747.500" cy="838" r="9.500"/>
          <path stroke="none" fill="#00ff00" d="M1737.500 784a10 10 0 0 0 20 0l-7 6-3 2-3-2zM1737.500 838a10 10 0 0 0 20 0l-7 6-3 2-3-2z"/>
          <path stroke="#00c000" d="M1747.500 793v4.500M1742 797.500h10M1747.500 847v4M1742 851h10M1747.500 901v3.500M1742 904.500h10"/>
          <path stroke="#f00" d="M1735.500 901a12 9.500 0 0 1 24 0z"/><path stroke="#ff0" stroke-width="3" d="M1740 900.500a8 6 0 0 1 15 0"/>
          <circle cx="1747.500" cy="965" r="13.500"/><circle cx="1747.500" cy="965" r="9" fill="#008080" stroke="#0c0" stroke-dasharray="2 1"/>
        </g>
      </g>
    </svg>

    <div class="sheet">
      <table>
        <colgroup><col class="c0"><col class="c1"><col class="c1"><col class="c1"><col class="c2"><col class="c3"><col class="c4"><col class="c4"><col class="c4"><col class="c4"><col class="c4"><col class="c4"><col class="c4"><col class="c5"></colgroup>
        <tbody>
        <tr class="h10 blank"><td></td><td></td><td></td><td></td><td></td><td></td><td></td><td></td><td></td><td></td><td></td><td></td><td></td><td></td></tr>
        <tr class="h22 blank"><th class="title" colspan="6" rowspan="2">AYDINLATMA HESABI</th><td></td><td></td><td></td><td></td><td></td><td></td><td></td><td></td></tr>
        <tr class="h14 blank"><td></td><td></td><td></td><td></td><td></td><td></td><td></td><td></td></tr>
        <tr class="h24 names"><td class="m1"></td><th rowspan="3">MUTFAK</th><th rowspan="3">SALON</th><th rowspan="3">OTURMA<br>ODASI</th><th rowspan="3">ÇOCUK<br>ODASI</th><th rowspan="3">E.YATAK<br>ODASI</th><th rowspan="3">banyo</th><th rowspan="3">hol</th><th rowspan="3">antre</th><th rowspan="3">balkon</th><th rowspan="3">vc/lava<br>bo</th><th rowspan="3">kiler</th><th rowspan="3">E.YATAK<br>ODASI</th><td class="x"></td></tr>
        <tr class="h12"><td class="m2">MAHAL İSMİ</td><td class="x"></td></tr>
        <tr class="h12"><td class="m3"></td><td class="x"></td></tr>
        <tr class="h15 hot"><th>Mahal eni ( a ) ( m )</th><td>4,9</td><td>3,50</td><td>1,3</td><td>4,9</td><td>3,5</td><td>2,6</td><td>1,3</td><td>1,3</td><td>3,7</td><td>1,25</td><td>2,6</td><td>3,5</td><td class="x"></td></tr>
        <tr class="h15 hot"><th>Mahal boyu ( b ) ( m )</th><td>2,8</td><td>5,20</td><td>5,1</td><td>2,8</td><td>5,2</td><td>2,5</td><td>5,1</td><td>5,1</td><td>1,4</td><td>1,2</td><td>1,2</td><td>5,2</td><td class="x"></td></tr>
        <tr class="h14 it"><th>Mahal yüksekliği ( H ) (&#160; m )</th><td>3,00</td><td>3,00</td><td>3,00</td><td>3,00</td><td>3,00</td><td>3,00</td><td>3,00</td><td>3,00</td><td>3,00</td><td>3,00</td><td>3,00</td><td>3,00</td><td class="x"></td></tr>
        <tr class="h15 lft"><th>Armatür yüksekliği ( h ) ( m )</th><td>3,00- 0,85</td><td>3,00- 0,85</td><td>3,00- 0,85</td><td>3,00- 0,85</td><td>3,00- 0,85</td><td>3,00- 0,85</td><td>3,00- 0,85</td><td>3,00- 0,85</td><td>3,00- 0,85</td><td>3,00- 0,85</td><td>3,00- 0,85</td><td>3,00- 0,85</td><td class="x"></td></tr>
        <tr class="h15"><th>İstenilen aydınlık şiddeti ( E ) Lüx</th><td>200</td><td>100</td><td>100</td><td>100</td><td>100</td><td>101</td><td>102</td><td>103</td><td>104</td><td>105</td><td>106</td><td>107</td><td class="x"></td></tr>
        <tr class="h15 it"><th>Tavan-duvar-yer yansıtma faktörleri</th><td>80-50-30</td><td>80-50-30</td><td>80-50-30</td><td>80-50-30</td><td>80-50-30</td><td>80-50-31</td><td>80-50-32</td><td>80-50-33</td><td>80-50-34</td><td>80-50-35</td><td>80-50-36</td><td>80-50-37</td><td class="x"></td></tr>
        <tr class="h46"><th>Mahal endeksi ( k )<br>k= (a x b) / h x (a + b)</th><td>0,83</td><td>0,97</td><td>0,48</td><td>0,83</td><td>0,97</td><td>0,59</td><td>0,48</td><td>0,48</td><td>0,47</td><td>0,28</td><td>0,38</td><td>0,97</td><td class="x"></td></tr>
        <tr class="h15"><th>Mahal verimi (cetvelden)&#160; ( h )</th><td>0,31</td><td>0,36</td><td>0,24</td><td>0,31</td><td>0,36</td><td>0,24</td><td>0,24</td><td>0,24</td><td>0,24</td><td>0,24</td><td>0,24</td><td>0,36</td><td class="x"></td></tr>
        <tr class="h15"><th>Seçilen armatür gücü ( W )</th><td>100</td><td>60</td><td>60</td><td>60</td><td>60</td><td>60</td><td>60</td><td>60</td><td>60</td><td>60</td><td>60</td><td>60</td><td class="x"></td></tr>
        <tr class="h14"><th>Seçilen armatür ışık akısı ( Ø )</th><td>6600</td><td>2400</td><td>3200</td><td>3200</td><td>3400</td><td>3400</td><td>3400</td><td>3400</td><td>3400</td><td>3400</td><td>3400</td><td>3400</td><td class="x"></td></tr>
        <tr class="h15"><th>Seçilen armatür tipi</th><td>J</td><td>N</td><td>J</td><td>J</td><td>J</td><td>J</td><td>J</td><td>J</td><td>J</td><td>J</td><td>J</td><td>J</td><td class="x"></td></tr>
        <tr class="h46"><th>Hesaplanan armatür sayısı<br>Z = ( E x a x b x 1,25 ) / Ø x h</th><td>1,68</td><td>2,63</td><td>1,08</td><td>1,73</td><td>1,86</td><td>1,01</td><td>1,04</td><td>1,05</td><td>0,83</td><td>0,24</td><td>0,51</td><td>1,99</td><td class="x"></td></tr>
        <tr class="h17"><th>Kullanılacak armatür sayısı</th><td>J 2x100 W</td><td>N 3x60 W</td><td>J 1x60 W</td><td>J 2x60 W</td><td>J 2x60 W</td><td>J 1x60 W</td><td>J 1x60 W</td><td>J 1x60 W</td><td>J 1x60 W</td><td>J 0x60 W</td><td>J 1x60 W</td><td>J 2x60 W</td><td class="x"></td></tr>
        <tr class="h12 blank"><td></td><td></td><td></td><td></td><td></td><td></td><td></td><td></td><td></td><td></td><td></td><td></td><td></td><td></td></tr>
        </tbody>
      </table>
    </div>
    <svg class="cursor" viewBox="0 0 98 78"><path fill="none" stroke="#fff" d="M0 29.500h46M51 29.500h47M48.500 0v27M48.500 32v46M46.500 27.500h4v4h-4z"/></svg>

    <div class="vp">[−][Top][2D Wireframe]</div>
    <div class="vpbtns">
      <button aria-label="Minimize view"><svg viewBox="0 0 12 12"><path fill="#f2f2f2" d="M1 6h10v3H1z"/></svg></button>
      <button aria-label="Restore view"><svg viewBox="0 0 12 12"><path fill="none" stroke="#f2f2f2" stroke-width="2" d="M2 4h6v7H2z"/><path fill="none" stroke="#f2f2f2" d="M4 1.500h7v8H9"/></svg></button>
      <button aria-label="Close view"><svg viewBox="0 0 12 12"><path stroke="#f2f2f2" stroke-width="2" d="M2 1l8 10M10 1L2 11"/></svg></button>
    </div>
    <svg class="cube" viewBox="0 0 132 132">
      <circle cx="66" cy="66" r="53.500" fill="none" stroke="#8a9096" stroke-opacity=".36" stroke-width="13"/>
      <rect x="40.500" y="40.500" width="51" height="51" fill="#c3c5c6" fill-opacity=".8" stroke="#a0a0a0"/>
      <rect x="50" y="50" width="32" height="32" fill="#a4a8ac" fill-opacity=".5"/>
      <g text-anchor="middle"><text x="66" y="71" class="top">TOP</text><text x="66" y="17">N</text><text x="66" y="129">S</text><text x="10" y="73">W</text><text x="122" y="73">E</text></g>
    </svg>
    <button class="wcs">WCS<i></i></button>
    <div class="nav">
      <svg viewBox="0 0 32 212" fill="none" stroke="#3f454b" stroke-width="1.500">
        <circle cx="26" cy="5" r="3.500"/><path d="M24 3l4 4M28 3l-4 4"/>
        <path d="M5 30a11 11 0 0 1 11-11h10v11a10 10 0 0 1-21 0z"/><circle cx="16" cy="30" r="6"/>
        <path fill="#3f454b" d="M13 49h6l-3 3z" stroke="none"/><path d="M4 56h25" stroke-width="1"/>
        <path d="M11 83l-2-6-4-6 2-1 4 3-1-9h2l2 6 1-7h2l1 7 3-6 2 1-2 7 4-3 1 1-5 9-2 4z"/>
        <path d="M5 90l14 14M5 104l14-14M5 94v-4h4M15 90h4v4M5 100v4h4"/><circle cx="20" cy="104" r="5"/><path d="M23 108l5 4" stroke-width="3"/>
        <path fill="#3f454b" d="M13 119h6l-3 3z" stroke="none"/>
        <path d="M14 148v-14h-3l5-6 4 6h-3v14zM20 138c10 1 9 8-2 7M12 138c-10 1-9 7-1 7m0 3l-4-3 4-3"/>
        <path d="M4 164h25" stroke-width="1"/><path d="M5 169h5v6H5zM13 169h5v6h-5zM21 169h5v6h-5zM5 179h15v12H5z"/><path fill="#3f454b" d="M10 181l6 4-6 4z"/>
        <circle cx="26" cy="206" r="3.500"/><path d="M24 206h4"/>
      </svg>
    </div>

    <div class="cmd">
      <i class="grip"></i>
      <button aria-label="Close command line"><svg viewBox="0 0 12 12"><path stroke="#e0e0e0" stroke-width="2" d="M2 2l8 8M10 2l-8 8"/></svg></button>
      <button aria-label="Customize command line"><svg viewBox="0 0 16 16"><path fill="#e0e0e0" d="M1 13l6-6c-1-4 2-7 6-6l-3 3 1 2 2 1 3-3c1 4-2 7-6 6l-6 6z"/></svg></button>
      <label for="cmdin"><svg viewBox="0 0 16 12"><path fill="#eee" stroke="#777" d="M.5.5h15v11H.5z"/><path fill="#777" d="M0 0h16v3H0z"/><path fill="none" stroke="#444" d="M2 5l3 2-3 2M6 10h4"/></svg><i class="arr lg dark"></i></label>
      <span class="caret"></span><input id="cmdin" type="text"><i class="up"></i>
    </div>
  </main>

  <footer class="status">
    <div class="layouts"><button class="on">Model</button><button>Layout1</button><button>Layout2</button><button class="plus" aria-label="Add layout">+</button></div>
    <div class="toggles">
      <span class="grp"><button class="txt">MODEL</button></span>
      <span class="grp"><button class="act" aria-label="Grid"><svg viewBox="0 0 16 16"><path stroke="#fff" d="M4.500 0v16M8.500 0v16M12.500 0v16M0 4.500h16M0 8.500h16M0 12.500h16"/></svg></button><button aria-label="Snap"><svg viewBox="0 0 16 16"><path stroke="#dcdcdc" stroke-width="2" stroke-dasharray="2 3" d="M2 3h12M2 8h12M2 13h12"/></svg></button><i class="arr lg"></i></span>
      <span class="grp"><button aria-label="Ortho"><svg viewBox="0 0 16 16"><path class="sw" d="M1.500 0v14.500H16M1.500 9.500h5v5"/></svg></button><button class="act" aria-label="Polar"><svg viewBox="0 0 16 16"><circle class="sw" cx="8" cy="8" r="6"/><path class="sw" d="M15 8H8l6-7M8 8h8"/></svg></button><i class="arr lg"></i><button aria-label="Isodraft"><svg viewBox="0 0 16 16"><path stroke="#e06060" d="M1 2l13 13"/><path stroke="#40c070" d="M8 0v11"/></svg></button><i class="arr lg"></i></span>
      <span class="grp"><button class="act" aria-label="Object snap tracking"><svg viewBox="0 0 16 16"><path class="sw" d="M14 1L2 14h14"/><path fill="#fff" d="M7 7h3v3H7z"/></svg></button><button class="act" aria-label="Object snap"><svg viewBox="0 0 16 16"><path class="sw" d="M1 1h4v4H1zM7 3h7v12H2V7"/></svg></button><i class="arr lg"></i></span>
      <span class="grp"><button class="act" aria-label="Annotation visibility"><svg viewBox="0 0 16 16"><path fill="#fff" d="M6 1l5 14-2-1-3-4-3 4-3 1z"/><circle class="sw" cx="13" cy="4" r="2"/></svg></button><button aria-label="Auto scale"><svg viewBox="0 0 16 16"><path class="fw" d="M6 1l5 14-2-1-3-4-3 4-3 1zM13 0l-3 5h3l-2 4 5-6h-3l2-3z"/></svg></button><button aria-label="Annotation scale"><svg viewBox="0 0 16 16"><path class="fw" d="M8 1l5 14-2-1-3-4-3 4-3 1z"/></svg></button><button class="txt">1:1</button><i class="arr lg"></i></span>
      <span class="grp"><button aria-label="Workspace"><svg viewBox="0 0 16 16"><circle cx="8" cy="8" r="4.500" fill="none" stroke="#dcdcdc" stroke-width="3"/><path stroke="#dcdcdc" stroke-width="3" d="M8 0v3M8 13v3M0 8h3M13 8h3M2.500 2.500l2 2M11.500 11.500l2 2M13.500 2.500l-2 2M4.500 11.500l-2 2"/></svg></button><i class="arr lg"></i></span>
      <span class="grp one"><button aria-label="Annotation monitor"><svg viewBox="0 0 16 16"><path class="sw2" d="M8 0v16M0 8h16"/></svg></button></span>
      <span class="grp one"><button aria-label="Isolate objects"><svg viewBox="0 0 16 16"><path class="sw" d="M1 1h5v6H1zM4 15l3-5 3 5z"/><circle class="sw" cx="13" cy="7" r="2.500"/></svg></button></span>
      <span class="grp one"><button aria-label="Graphics performance"><svg viewBox="0 0 16 16"><path fill="#2f6cb0" d="M0 0h10l4 4v8H0z"/><path class="sw" d="M2 3h8M4 1v8"/><path class="fy" d="M0 9h6v6H0z"/><path fill="none" stroke="#4fc04f" stroke-width="2.500" d="M6 11l4 4 6-8"/></svg></button></span>
      <span class="grp one"><button aria-label="Clean screen"><svg viewBox="0 0 16 16"><path class="sw" d="M.5 2.500h15v11H.5zM3 11l3-3M3 8.500V11h2.500M13 5l-3 3M13 7.500V5h-2.500"/></svg></button><button aria-label="Customization"><svg viewBox="0 0 16 16"><path class="sw2" d="M0 2h16M0 8h16M0 14h16"/></svg></button></span>
    </div>
  </footer>
</div>

<footer class="taskbar">
  <div class="weather">
    <svg viewBox="0 0 22 22"><path fill="#fbb829" d="M12 0c7 3 10 8 8 14-3 8-14 10-20 2 4 1 15 0 12-16z"/></svg>
    <div>15°C<br><span>Açık</span></div>
  </div>
  <div class="apps">
    <button aria-label="Start"><svg viewBox="0 0 24 24"><path fill="#4cc2ff" d="M0 0h11.500v11.500H0zM12.500 0H24v11.500H12.500zM0 12.500h11.500V24H0zM12.500 12.500H24V24H12.500z"/></svg></button>
    <button aria-label="Search"><svg viewBox="0 0 24 24"><circle cx="14" cy="10" r="8" fill="#5a4450" stroke="#e8e8e8" stroke-width="2.500"/><path stroke="#e8e8e8" stroke-width="3" d="M8 16l-6 6"/></svg></button>
    <button aria-label="Task view"><svg viewBox="0 0 24 24"><path fill="#f2f2f2" d="M7 1h17v16H7z"/><path fill="#777" fill-opacity=".85" d="M0 7h17v15H0z"/><path fill="#bdbdbd" d="M7 7h10v10H7z"/></svg></button>
    <button aria-label="Chat"><svg viewBox="0 0 24 24"><path fill="#6a6fd4" d="M12 1a11 11 0 1 1-5 21l-6 1 1-6A11 11 0 0 1 12 1z"/><path fill="#fff" d="M6 8h9v9H6zM16 11l3-3v9l-3-3z"/></svg></button>
    <button class="run" aria-label="Explorer"><svg viewBox="0 0 24 24"><path fill="#e8a60c" d="M0 2h9l2 3v5H0z"/><path fill="#ffd152" d="M0 7l10-3h14v19H0z"/><path fill="#1275c4" d="M4 18l2-2h12l2 2v5H4z"/></svg></button>
    <button class="run" aria-label="WhatsApp"><svg viewBox="0 0 24 24"><path fill="#fff" d="M12 0a12 12 0 1 1-6 22l-6 2 2-6A12 12 0 0 1 12 0z"/><path fill="#3dc655" d="M12 2a10 10 0 1 1-5 18l-4 1 1-4A10 10 0 0 1 12 2z"/><path fill="#fff" d="M8 6l2 4-1 2c1 2 2 3 4 4l2-2 3 2c0 2-2 3-4 3-4-1-8-5-8-9 0-2 1-3 2-4z"/></svg></button>
    <button aria-label="Visual Studio"><svg viewBox="0 0 24 24"><path fill="#8556c4" d="M0 7l3-2 14 15v4zM0 7v10l3 2V6z"/><path fill="#a97be6" d="M17 0v6L3 19l-3-2z"/><path fill="#c79bf5" d="M17 0l7 3v18l-7 3z"/></svg></button>
    <button aria-label="Gaming"><svg viewBox="0 0 24 24"><path fill="#8d948e" d="M3 4l12 2 6 5-1 7-5 4-8-6z"/><path fill="#151515" d="M5 6l9 1 6 5-1 5-4 3-7-6z"/><path fill="#22dd22" d="M8 11l4 1 3-1 3 3-3 5-5-4z"/></svg></button>
    <button aria-label="Office"><svg viewBox="0 0 24 24"><path fill="#e0401c" d="M3 5l11-5 7 2v20l-7 2-10-4 10 1V4L8 6v12l-5 2z"/><path fill="#c41e3c" d="M3 5l5 1v12l-5 2z"/></svg></button>
    <button aria-label="Store"><svg viewBox="0 0 24 24"><path fill="none" stroke="#2aa6ea" stroke-width="2" d="M7 6V1h10v5"/><path fill="#f4f4f4" d="M1 5h22v16l-2 3H3l-2-3z"/><path fill="#f25022" d="M7 9h4v4H7z"/><path fill="#7fba00" d="M13 9h4v4h-4z"/><path fill="#00a4ef" d="M7 15h4v4H7z"/><path fill="#ffb900" d="M13 15h4v4h-4z"/></svg></button>
    <button aria-label="VS Code"><svg viewBox="0 0 24 24"><path fill="#0e6fb8" d="M0 8l2-2 16 13v5z"/><path fill="#1681cc" d="M0 16l2 2L18 5V0z"/><path fill="#2ba0ee" d="M17 0l7 3v18l-7 3z"/></svg></button>
    <button aria-label="Spotify"><svg viewBox="0 0 24 24"><circle cx="12" cy="12" r="12" fill="#1ed760"/><path fill="none" stroke="#111" stroke-width="2.500" d="M4 8c6-2 12-1 16 2M5 12c5-2 10-1 14 2M6 16c4-1 8-1 12 1"/></svg></button>
    <button aria-label="Edge"><svg viewBox="0 0 24 24"><circle cx="12" cy="12" r="12" fill="#1b7fd0"/><path fill="#4fd08a" d="M3 5a12 12 0 0 1 21 8c-1 4-6 5-9 3 3-6-4-10-12-7z"/><path fill="#35b8ec" d="M2 6C9 2 17 5 15 12c-3-4-8-3-9 1-2 5 2 9 6 11C2 24-2 14 2 6z"/></svg></button>
    <button class="run" aria-label="Chrome"><svg viewBox="0 0 24 24"><circle cx="11" cy="13" r="11" fill="#34a853"/><path fill="#ea4335" d="M11 13L1 8a11 11 0 0 1 20 0z"/><path fill="#fbbc05" d="M11 13l10-5a11 11 0 0 1-9 16z"/><circle cx="11" cy="13" r="5" fill="#4285f4" stroke="#fff" stroke-width="1.500"/></svg><svg class="face" viewBox="0 0 16 16"><circle cx="8" cy="8" r="8" fill="#5a9cc0"/><path fill="#2a1d1d" d="M3 14C3 6 4 2 8 2s5 4 5 12z"/><circle cx="8" cy="7" r="2.500" fill="#d9a58c"/></svg></button>
    <button class="run" aria-label="Phone"><svg viewBox="0 0 24 24"><path fill="#1476c8" d="M2 2h15v14h6l-4 6H5l-5-6h2z"/><path fill="#36a4f0" d="M2 2h13v9H2z"/></svg><span class="badge">29</span></button>
    <button class="run" aria-label="WinRAR"><svg viewBox="0 0 24 24"><path fill="#c02a4c" d="M0 0h24v8H0z"/><path fill="#3558b8" d="M0 8h24v8H0z"/><path fill="#3f8a3a" d="M0 16h24v8H0z"/><path fill="#e0a040" d="M9 0h6v24H9z"/><path fill="none" stroke="#fff" d="M8.500 10.500h7v6h-7z"/></svg></button>
    <button class="run cur" aria-label="AutoCAD"><svg viewBox="0 0 24 24"><path fill="#fbeee6" d="M0 0h24v24H0z"/><path fill="#c4262e" d="M10 3h5l5 18h-4l-1-5H9l-2 5H4zM12 7l-2 6h4z" fill-rule="evenodd"/></svg></button>
  </div>
  <div class="tray">
    <svg viewBox="0 0 16 16"><path fill="none" stroke="#eee" stroke-width="1.500" d="M2 11l6-6 6 6"/></svg>
    <svg viewBox="0 0 16 16"><path fill="#b9b9b9" d="M1 12a4 4 0 0 1 3-6 5 5 0 0 1 9 1l3 5z"/><circle cx="12" cy="12" r="4" fill="#d8232c"/><path stroke="#fff" d="M10 10l4 4M14 10l-4 4"/></svg>
    <span class="lang">TUR</span>
    <svg viewBox="0 0 16 16"><path fill="none" stroke="#eee" stroke-width="1.500" d="M1 6c4-4 10-4 14 0M3 9c3-3 7-3 10 0M5 12c2-2 4-2 6 0"/><circle cx="8" cy="13" r="1.500" fill="#eee"/></svg>
    <svg viewBox="0 0 16 16"><path fill="none" stroke="#eee" d="M1 6h3l3-3v10l-3-3H1zM9 6c1 1 1 3 0 4M11 4c2 2 2 6 0 8M13 2c3 3 3 9 0 12"/></svg>
    <svg viewBox="0 0 16 16"><path fill="none" stroke="#eee" stroke-width="1.500" d="M6 5h8v8H3V9M3 1v3M1 4h4v3L3 9 1 7z"/><path fill="#eee" d="M6 7h6v4H5zM15 7h1v4h-1z"/></svg>
    <div class="clock">05:33<br>9.06.2022</div>
    <span class="badge20">20</span>
  </div>
</footer>
</body>
</html>
```
FILE: styles.css
```css
* { box-sizing: border-box; }
html, body { height: 100%; }
body {
  margin: 0;
  display: flex;
  flex-direction: column;
  background: #05060f;
  color: #e8e8e8;
  font: 12px/16px Roboto, "Open Sans", sans-serif;
  overflow: hidden;
}
button, input { font: inherit; color: inherit; background: none; border: 0; padding: 0; margin: 0; }
.sprite { position: absolute; width: 0; height: 0; }

/* icon paints */
.fw { fill: #dcdcdc; } .fb { fill: #7cc4ff; } .fy { fill: #ffd27a; } .fr { fill: #f0625f; } .fg { fill: #6a7079; }
.bg { fill: #222933; } .bgr { fill: #3b4453; }
.sw { fill: none; stroke: #dcdcdc; } .sw2 { fill: none; stroke: #dcdcdc; stroke-width: 2; }
.sb { fill: none; stroke: #7cc4ff; } .sy { fill: none; stroke: #ffd27a; }

.arr { display: inline-block; width: 0; height: 0; border: 3px solid transparent; border-top-color: #d0d0d0; border-bottom: 0; }
.arr.lg { border-width: 4px; border-bottom: 0; }
.arr.dim { border-top-color: #8a8f96; }
.arr.dark { border-top-color: #666; }

.window {
  flex: 1;
  min-height: 0;
  margin: 2px 2px 0;
  border: 1px solid #0a8fd6;
  background: #222933;
  display: flex;
  flex-direction: column;
}

/* title bar */
.titlebar { display: flex; height: 48px; }
.logo { width: 49px; padding: 8px 0 0 11px; display: flex; }
.heads { flex: 1; display: flex; flex-direction: column; justify-content: space-between; min-width: 0; }
.topline { display: flex; align-items: center; justify-content: space-between; height: 28px; }
.quick { display: flex; align-items: center; gap: 8px; padding-left: 4px; }
.quick svg { width: 16px; height: 16px; display: block; }
.quick .more svg { width: 8px; height: 8px; }
.doc-title { display: flex; gap: 12px; color: #f2f2f2; white-space: nowrap; }
.account { display: flex; align-items: center; padding-right: 9px; }
.ic { width: 16px; height: 16px; margin-right: 8px; }
.arr-r { border: 4px solid transparent; border-left-color: #e0e0e0; border-right: 0; margin-right: 6px; }
.search { width: 178px; height: 24px; background: #454f61; padding: 0 3px; font-style: italic; margin-right: 6px; }
.search::placeholder { color: #b4b9c1; opacity: 1; }
.search-ic { margin-right: 9px; }
.user { margin: 0 10px 0 -3px; width: 74px; white-space: nowrap; text-align: left; }
.account .arr { margin-right: 10px; }
.account .ic + .arr { margin-left: -4px; }
.vsep { width: 1px; height: 21px; background: #4a5a70; margin-right: 8px; }
.help { width: 16px; height: 16px; border-radius: 8px; background: #dcdcdc; color: #222933; font-weight: 700; line-height: 16px; margin-right: 8px; }
.win { width: 12px; height: 12px; margin-left: 13px; }
.win svg { display: block; }

.tabs { display: flex; align-items: flex-end; }
.tabs button { height: 18px; padding: 0 10px; color: #b9bec6; border-radius: 2px 2px 0 0; white-space: nowrap; }
.tabs .on { background: #3b4453; color: #f0f0f0; padding: 0 9px; }
.tabs .mini { background: #f0f0f0; width: 15px; height: 9px; padding: 0; margin: 0 5px 5px 14px; border-radius: 1px; display: flex; justify-content: center; align-items: center; }
.mini i { border: 2px solid transparent; border-bottom-color: #444; border-top: 0; }
.tabs > .arr { margin-bottom: 8px; }

/* ribbon */
.ribbon { display: flex; gap: 1px; margin: 0 4px 0 5px; }
.panel { background: #3b4453; padding-top: 4px; display: flex; flex-direction: column; flex: none; }
.body { display: flex; height: 72px; }
.cap { height: 21px; padding-top: 2px; display: flex; align-items: center; justify-content: center; gap: 7px; position: relative; }
.launch { width: 8px; height: 8px; }
.launch.corner { position: absolute; right: 3px; }
.big { display: flex; flex-direction: column; align-items: center; line-height: 18px; padding-top: 2px; white-space: nowrap; }
.big svg { width: 32px; height: 34px; margin-bottom: 1px; flex: none; }
.big .arr { margin-top: 3px; }
.col { display: flex; flex-direction: column; }
.tool { height: 24px; display: flex; align-items: center; gap: 6px; white-space: nowrap; }
.tool svg { width: 16px; height: 16px; flex: none; }
.tool .arr { margin-left: 5px; }

.p-draw { width: 223px; }
.p-draw .big { width: 46px; } .p-draw .big:first-child { width: 42px; } .p-draw .big.circ { width: 50px; } .p-draw .col { padding-left: 1px; }
.p-draw .tool .arr { margin-left: 1px; }
.p-modify { width: 249px; }
.p-modify .body { padding-left: 6px; }
.p-modify .col { width: 72px; } .p-modify .col:nth-child(2) { width: 69px; } .p-modify .col:nth-child(3) { width: 76px; } .p-modify .col:last-child { width: 20px; }
.p-annot { width: 188px; }
.p-annot .big { width: 48px; } .p-annot .big:nth-child(2) { width: 58px; } .p-annot .col { padding-left: 7px; }
.p-annot .tool { gap: 5px; } .p-annot .tool .arr { margin-left: 2px; }
.p-layers { width: 272px; }
.p-layers .big { width: 62px; }
.combo { height: 22px; margin: 1px 0; background: #4c586d; border: 1px solid #262d3a; display: flex; align-items: center; padding: 0 2px; }
.combo .end { margin-left: auto; }
.sw-y { width: 15px; height: 15px; background: #ff0; border: 1px solid #888; margin: 0 10px 0 11px; }
.sw-y.small { width: 14px; height: 14px; border-color: #000; margin: 0 5px 0 2px; }
.rule { width: 64px; height: 1px; background: #f0f0f0; margin: 0 2px 0 1px; }
.rule.thick { height: 4px; }
.layer-combo { width: 208px; padding-left: 3px; }
.layer-combo svg { width: 16px; height: 16px; margin-right: 3px; }
.icons { display: flex; gap: 8px; height: 24px; padding-left: 4px; }
.icons button { display: flex; align-items: center; gap: 5px; white-space: nowrap; }
.icons svg { width: 16px; height: 16px; }
.p-block { width: 160px; }
.p-block .big { width: 42px; } .p-block .col { padding-left: 3px; } .p-block .tool { gap: 5px; }
.p-block .tool .arr { margin-left: 1px; }
.p-props { width: 264px; }
.p-props .big { width: 64px; }
.prop { display: flex; align-items: center; gap: 2px; height: 24px; }
.prop > svg { width: 16px; height: 16px; }
.prop .combo { width: 180px; }
.p-groups { width: 69px; }
.p-groups .big { width: 42px; }
.p-groups .tool, .p-utils .tool, .p-clip .tool { width: 24px; justify-content: center; }
.tool.sel { background: #4a6a90; border: 1px solid #7cc4ff; }
.p-utils { width: 95px; } .p-utils .big { width: 70px; }
.p-clip { width: 79px; } .p-clip .big { width: 53px; }
.p-view { flex: 1; } .p-view .big { width: 62px; padding-top: 8px; } .p-view .cap { justify-content: flex-start; padding-left: 6px; }

/* file tabs */
.files { display: flex; height: 31px; align-items: flex-end; padding: 0 0 4px 15px; background: linear-gradient(#3b4453, #3b4453) bottom/100% 4px no-repeat; margin: 0 3px; }
.file { height: 22px; background: #2b323e; border-radius: 8px 10px 0 0; text-align: left; white-space: nowrap; color: #b9bec6; width: 124px; padding-left: 16px; }
.file.on { background: #3b4453; color: #f0f0f0; width: 208px; padding: 0 16px 0 15px; display: flex; justify-content: space-between; align-items: center; }
.file svg { width: 8px; height: 8px; }
.file.add { width: 22px; height: 17px; margin: 0 0 4px 4px; padding: 0; text-align: center; font-size: 18px; line-height: 16px; }

/* model space */
.canvas { flex: 1; min-height: 0; position: relative; overflow: hidden; background: #212830; margin: 0 3px; }
.drawing { position: absolute; inset: 0; width: 100%; height: 100%; }
.frame { stroke: #b8686b; stroke-width: 2; }
.cad { fill: #e0e000; font-family: "DejaVu Sans", sans-serif; }
.cad .serif { font-family: "Liberation Serif", serif; } .cad .cy { fill: #0ff; } .cad .dimt { fill: #b8b814; }
.yl { fill: none; stroke: #f0f000; stroke-width: 1; } .yd { fill: none; stroke: #a3a312; stroke-width: 2; }
.bl { fill: none; stroke: #0c0ce0; stroke-width: 1; }
.white-b { fill: #fff; font: bold 14px "Liberation Sans", sans-serif; }
.eq { fill: #ff0; font: 17px "Liberation Sans", sans-serif; }
.faz { font: bold 17px "Liberation Sans", sans-serif; fill: #000; }
.green { fill: #ccffcc; stroke: #808000; stroke-width: 3; }
.math { font: italic 17px "Liberation Serif", serif; fill: #111; } .math path { fill: none; stroke: #333; }
.math .den { font-size: 15px; }
.redl { fill: none; stroke: #ed1c24; stroke-width: 2; } .bluel { fill: none; stroke: #0a96e0; stroke-width: 3; }
.note { font: bold 8px "Liberation Sans", sans-serif; fill: #ed1c24; }
.ucs { fill: none; stroke: #e8e8e8; }
.leg { fill: none; stroke: #5f6062; stroke-width: 1; }
.ls { fill: #0ff; font: 9px "Liberation Sans", sans-serif; }
.ll { fill: #0ff; font: 11px "Liberation Sans", sans-serif; }

.sheet { position: absolute; left: 605px; top: 79px; border: 1px solid #f03c3c; background: #fff; color: #000; font: 9px/11px "Liberation Sans", sans-serif; }
table { border-collapse: collapse; table-layout: fixed; width: 817px; }
.c0 { width: 149px; } .c1 { width: 63px; } .c2 { width: 61px; } .c3 { width: 59px; } .c4 { width: 45px; } .c5 { width: 44px; }
.h10 { height: 10px; } .h12 { height: 12px; } .h14 { height: 14px; } .h15 { height: 15px; } .h17 { height: 17px; } .h22 { height: 22px; } .h24 { height: 24px; } .h46 { height: 46px; }
td, th { padding: 0; border: 1px solid #000; text-align: center; font-weight: 400; white-space: nowrap; overflow: hidden; }
tr th:first-child { text-align: left; padding-left: 1px; vertical-align: bottom; }
.h46 th:first-child { vertical-align: middle; }
.blank td, td.x { border: 1px solid #dcdcdc; }
tr .title.title { text-align: center; vertical-align: middle; font: bold 19px/24px "Liberation Serif", serif; border: 1px solid #000; border-bottom-width: 2px; padding-top: 3px; }
.names th { font: bold 10px/11px "DejaVu Sans Mono", monospace; border-top-width: 2px; padding-top: 4px; }
.m1 { border-bottom-color: #dcdcdc; border-top-width: 2px; } .m2 { border-top-color: #dcdcdc; border-bottom-color: #dcdcdc; font-size: 10px; line-height: 11px; } .m3 { border-top-color: #dcdcdc; }
.hot td:not(.x) { background: #ff0; color: #f00; }
.it td { font-size: 10px; font-style: italic; }
.lft td { font-size: 10px; text-align: left; padding-left: 1px; }

.cursor { position: absolute; left: 1260px; top: 175px; width: 98px; height: 78px; }
.vp { position: absolute; left: 3px; top: 6px; color: #f0f0f0; }
.vpbtns { position: absolute; right: 11px; top: 9px; display: flex; gap: 8px; }
.vpbtns button, .vpbtns svg { width: 12px; height: 12px; display: block; }
.cube { position: absolute; right: 17px; top: 40px; width: 132px; height: 132px; font: bold 20px "Liberation Sans", sans-serif; fill: #a9acae; }
.cube .top { font-size: 13px; fill: #4f565e; }
.wcs { position: absolute; right: 59px; top: 193px; width: 48px; height: 18px; border-radius: 4px; background: #8f93a0; color: #3c4250; padding-left: 4px; font: 11px/16px "Liberation Sans", sans-serif; display: flex; align-items: center; gap: 6px; }
.wcs i { border: 4px solid transparent; border-top-color: #6c7280; border-bottom: 0; }
.nav { position: absolute; right: 4px; top: 236px; width: 32px; height: 212px; border-radius: 4px; background: rgba(120, 124, 126, .62); }

.cmd { position: absolute; left: 383px; right: 383px; bottom: 1px; height: 26px; background: #fff; display: flex; align-items: center; }
.cmd button { width: 24px; height: 26px; background: #2b313c; display: flex; align-items: center; justify-content: center; }
.cmd button svg { width: 12px; height: 12px; } .cmd button + button svg { width: 16px; height: 16px; }
.grip { width: 6px; height: 26px; background: radial-gradient(#ddd 1px, transparent 1px) 0 3px/3px 4px #2b313c; }
.cmd label { display: flex; align-items: center; gap: 3px; padding-left: 5px; }
.cmd label svg { width: 16px; height: 14px; }
.caret { width: 1px; height: 15px; background: #000; margin-left: 3px; }
.cmd input { flex: 1; color: #000; min-width: 0; height: 26px; }
.up { border: 4px solid transparent; border-bottom-color: #777; border-top: 0; margin-right: 3px; }

/* status bar */
.status { display: flex; justify-content: space-between; height: 32px; margin: 0 3px; border-top: 1px solid #3a3f48; }
.layouts { display: flex; align-items: flex-start; padding-left: 11px; gap: 4px; }
.layouts button { height: 17px; width: 59px; background: #2a313c; color: #b9bec6; border-radius: 0 0 8px 8px; }
.layouts .on { background: #3b4453; color: #fff; font-weight: 700; }
.layouts .plus { width: 22px; font-size: 16px; line-height: 14px; }
.toggles { display: flex; gap: 3px; padding: 1px 2px 0 0; }
.grp { display: flex; align-items: center; height: 24px; background: #363e4c; gap: 1px; }
.grp button { width: 22px; height: 22px; display: flex; align-items: center; justify-content: center; }
.grp.one button { width: 23px; }
.grp svg { width: 16px; height: 16px; }
.grp .act { background: #5a8bc4; }
.grp .txt { width: auto; padding: 0 3px; }
.grp .arr { margin: 0 4px; }

/* taskbar */
.taskbar { height: 48px; display: grid; grid-template-columns: 1fr auto 1fr; align-items: center; background: linear-gradient(90deg, #221c30 0, #261a33 22%, #2c1a3a 30%, #391a2c 39%, #36241e 46%, #3a1f1d 55%, #5a1316 68%, #401713 82%, #2c1715 100%); }
.weather { display: flex; align-items: center; gap: 9px; padding-left: 30px; }
.weather svg { width: 20px; height: 22px; }
.weather span { color: #cfcfd4; }
.apps { display: flex; gap: 4px; }
.apps button { width: 40px; height: 40px; display: flex; align-items: center; justify-content: center; position: relative; border-radius: 4px; }
.apps svg { width: 24px; height: 24px; }
.apps .face { position: absolute; right: 3px; top: 2px; width: 16px; height: 16px; }
.apps .run::after { content: ""; position: absolute; bottom: 1px; left: 17px; width: 6px; height: 3px; border-radius: 2px; background: #a89aa4; }
.apps .cur { background: rgba(255, 255, 255, .1); }
.apps .cur::after { left: 12px; width: 16px; background: #dc9ce8; }
.badge { position: absolute; right: 0; top: 2px; width: 21px; height: 16px; border-radius: 8px; background: #d99be4; color: #1c1420; line-height: 16px; }
.tray { display: flex; align-items: center; justify-content: flex-end; gap: 8px; padding-right: 18px; color: #f0f0f0; }
.tray svg { width: 16px; height: 16px; }
.lang { margin: 0 11px 0 8px; }
.clock { text-align: right; line-height: 17px; width: 58px; white-space: nowrap; }
.badge20 { width: 20px; height: 16px; border-radius: 8px; background: #d99be4; color: #1c1420; text-align: center; margin-left: -2px; }
```
